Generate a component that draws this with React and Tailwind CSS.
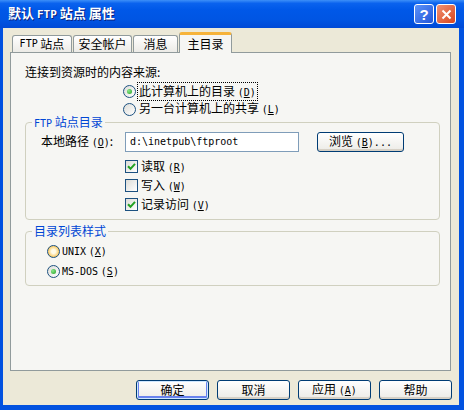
import React from 'react';

const mono = "font-['DejaVu_Sans_Mono',monospace] text-[10px]";

function M({ children }) {
  return <span className={mono}>{children}</span>;
}

function Key({ k }) {
  return (
    <span className={mono}>
      (<span className="underline">{k}</span>)
    </span>
  );
}

function Radio({ checked, hot }) {
  return (
    <span
      className={
        hot
          ? "flex h-[13px] w-[13px] shrink-0 items-center justify-center rounded-full border border-[#1c5180] bg-[radial-gradient(circle,#fffbe8_25%,#f8c04a_80%)]"
          : "flex h-[13px] w-[13px] shrink-0 items-center justify-center rounded-full border border-[#1c5180] bg-[linear-gradient(135deg,#dcdcd7,#ffffff)]"
      }
    >
      {checked && <span className="h-[5px] w-[5px] rounded-full bg-[radial-gradient(circle_at_35%_35%,#8be88b,#21a121)]" />}
    </span>
  );
}

function Check({ checked }) {
  return (
    <span className="flex h-[13px] w-[13px] shrink-0 items-center justify-center border border-[#1c5180] bg-[linear-gradient(135deg,#dcdcd7,#ffffff)]">
      {checked && (
        <svg width="9" height="9" viewBox="0 0 9 9">
          <path d="M1 4.2 L3.5 6.8 L8 1.8" fill="none" stroke="#21a121" strokeWidth="2" />
        </svg>
      )}
    </span>
  );
}

function Group({ title, className, children }) {
  return (
    <div className={"relative rounded-[4px] border border-[#d0d0bf] " + className}>
      <span className="absolute left-[6px] top-[-9px] bg-[#f6f6f3] px-[2px] leading-[16px] text-[#0046d5]">{title}</span>
      {children}
    </div>
  );
}

function Btn({ children, def, w = "w-[73px]" }) {
  return (
    <button
      className={
        (def
          ? "h-[20px] shrink-0 rounded-[3px] border border-[#003c74] bg-[linear-gradient(to_bottom,#ffffff,#ecebe6)] leading-[16px] shadow-[inset_0_0_0_1px_#cee7ff,inset_0_-1px_0_2px_#6982ee] "
          : "h-[20px] shrink-0 rounded-[3px] border border-[#003c74] bg-[linear-gradient(to_bottom,#ffffff,#ecebe6)] leading-[16px] shadow-[inset_0_-2px_0_#d6d0c5] ") + w
      }
    >
      {children}
    </button>
  );
}

function Tab({ children, w, active }) {
  if (active) {
    return (
      <div className={"relative z-10 -mb-[1px] flex h-[21px] items-center justify-center rounded-t-[3px] border-x border-t-[3px] border-x-[#919b9c] border-t-[#f6b33a] bg-[#f6f6f3] " + w}>
        {children}
      </div>
    );
  }
  return (
    <div className={"flex h-[17px] items-center justify-center rounded-t-[3px] border border-b-0 border-[#919b9c] bg-[linear-gradient(to_bottom,#ffffff,#ecebe6)] " + w}>
      {children}
    </div>
  );
}

export default function App() {
  return (
    <div className="flex h-[410px] w-[464px] flex-col bg-[#0252e0] text-[12px] leading-[16px] text-black font-['Noto_Sans_CJK_SC',sans-serif]">
      {/* title bar */}
      <div className="flex h-[28px] shrink-0 items-center pl-[8px] pr-[8px] bg-[linear-gradient(to_bottom,#3d8ff8_0%,#0a62ee_12%,#0058e8_35%,#0055e3_70%,#0049d6_100%)]">
        <span className="flex-1 text-[13px] font-bold text-white [text-shadow:1px_1px_0_#0a1f7a]">
          默认 <span className="font-['DejaVu_Sans_Mono',monospace] text-[11px]">FTP</span> 站点 属性
        </span>
        <div className="flex gap-[2px]">
          <div className="flex h-[20px] w-[20px] items-center justify-center rounded-[3px] border border-white bg-[linear-gradient(135deg,#5c93f9,#2356d8)] text-[15px] font-bold leading-none text-white font-['Liberation_Sans',sans-serif]">
            ?
          </div>
          <div className="flex h-[20px] w-[20px] items-center justify-center rounded-[3px] border border-white bg-[linear-gradient(135deg,#f09274,#d9451d)]">
            <svg width="11" height="11" viewBox="0 0 11 11">
              <path d="M1.5 1.5 L9.5 9.5 M9.5 1.5 L1.5 9.5" stroke="#fff" strokeWidth="2" />
            </svg>
          </div>
        </div>
      </div>

      {/* body */}
      <div className="mb-[5px] ml-[3px] mr-[5px] flex flex-1 flex-col bg-[#ece9d8] pb-[5px] pl-[7px] pr-[8px] pt-[4px]">
        <div className="flex h-[20px] shrink-0 items-end gap-[1px] pl-[2px]">
          <Tab w="w-[60px]">
            <M>FTP</M>&nbsp;站点
          </Tab>
          <Tab w="w-[59px]">安全帐户</Tab>
          <Tab w="w-[45px]">消息</Tab>
          <Tab w="w-[53px]" active>
            主目录
          </Tab>
        </div>

        <div className="flex-1 border border-[#919b9c] bg-[#f6f6f3] pl-[14px] pr-[10px]">
          <div className="mt-[11px] h-[16px]">连接到资源时的内容来源:</div>

          <div className="mt-[2px] ml-[98px]">
            <div className="flex h-[18px] items-center gap-[1px]">
              <Radio checked />
              <span className="border border-dotted border-black px-[1px] leading-[15px]">
                此计算机上的目录 <Key k="D" />
              </span>
            </div>
            <div className="flex h-[18px] items-center gap-[2px]">
              <Radio />
              <span className="px-[1px]">
                另一台计算机上的共享 <Key k="L" />
              </span>
            </div>
          </div>

          <Group
            className="mt-[4px] pb-[5px] pl-[15px] pt-[9px]"
            title={
              <>
                <M>FTP</M> 站点目录
              </>
            }
          >
            <div className="flex h-[20px] items-center">
              <span className="w-[84px] shrink-0">
                本地路径 <Key k="O" />:
              </span>
              <div className="flex h-[20px] w-[174px] shrink-0 items-center border border-[#7f9db9] bg-white pl-[4px]">
                <M>d:\inetpub\ftproot</M>
              </div>
              <div className="ml-[18px]">
                <Btn w="w-[87px]">
                  浏览 <Key k="B" />
                  <M>...</M>
                </Btn>
              </div>
            </div>
            <div className="ml-[84px] mt-[5px]">
              <div className="flex h-[19px] items-center gap-[3px]">
                <Check checked />
                <span>
                  读取 <Key k="R" />
                </span>
              </div>
              <div className="flex h-[19px] items-center gap-[3px]">
                <Check />
                <span>
                  写入 <Key k="W" />
                </span>
              </div>
              <div className="flex h-[19px] items-center gap-[3px]">
                <Check checked />
                <span>
                  记录访问 <Key k="V" />
                </span>
              </div>
            </div>
          </Group>

          <Group className="mt-[11px] pb-[4px] pl-[21px] pt-[9px]" title="目录列表样式">
            <div className="flex h-[20px] items-center gap-[2px]">
              <Radio hot />
              <span>
                <M>UNIX</M> <Key k="X" />
              </span>
            </div>
            <div className="flex h-[20px] items-center gap-[2px]">
              <Radio checked />
              <span>
                <M>MS-DOS</M> <Key k="S" />
              </span>
            </div>
          </Group>
        </div>

        <div className="-mr-[1px] mt-[9px] flex shrink-0 justify-end gap-[8px]">
          <Btn def>确定</Btn>
          <Btn>取消</Btn>
          <Btn>
            应用 <Key k="A" />
          </Btn>
          <Btn>帮助</Btn>
        </div>
      </div>
    </div>
  );
}
